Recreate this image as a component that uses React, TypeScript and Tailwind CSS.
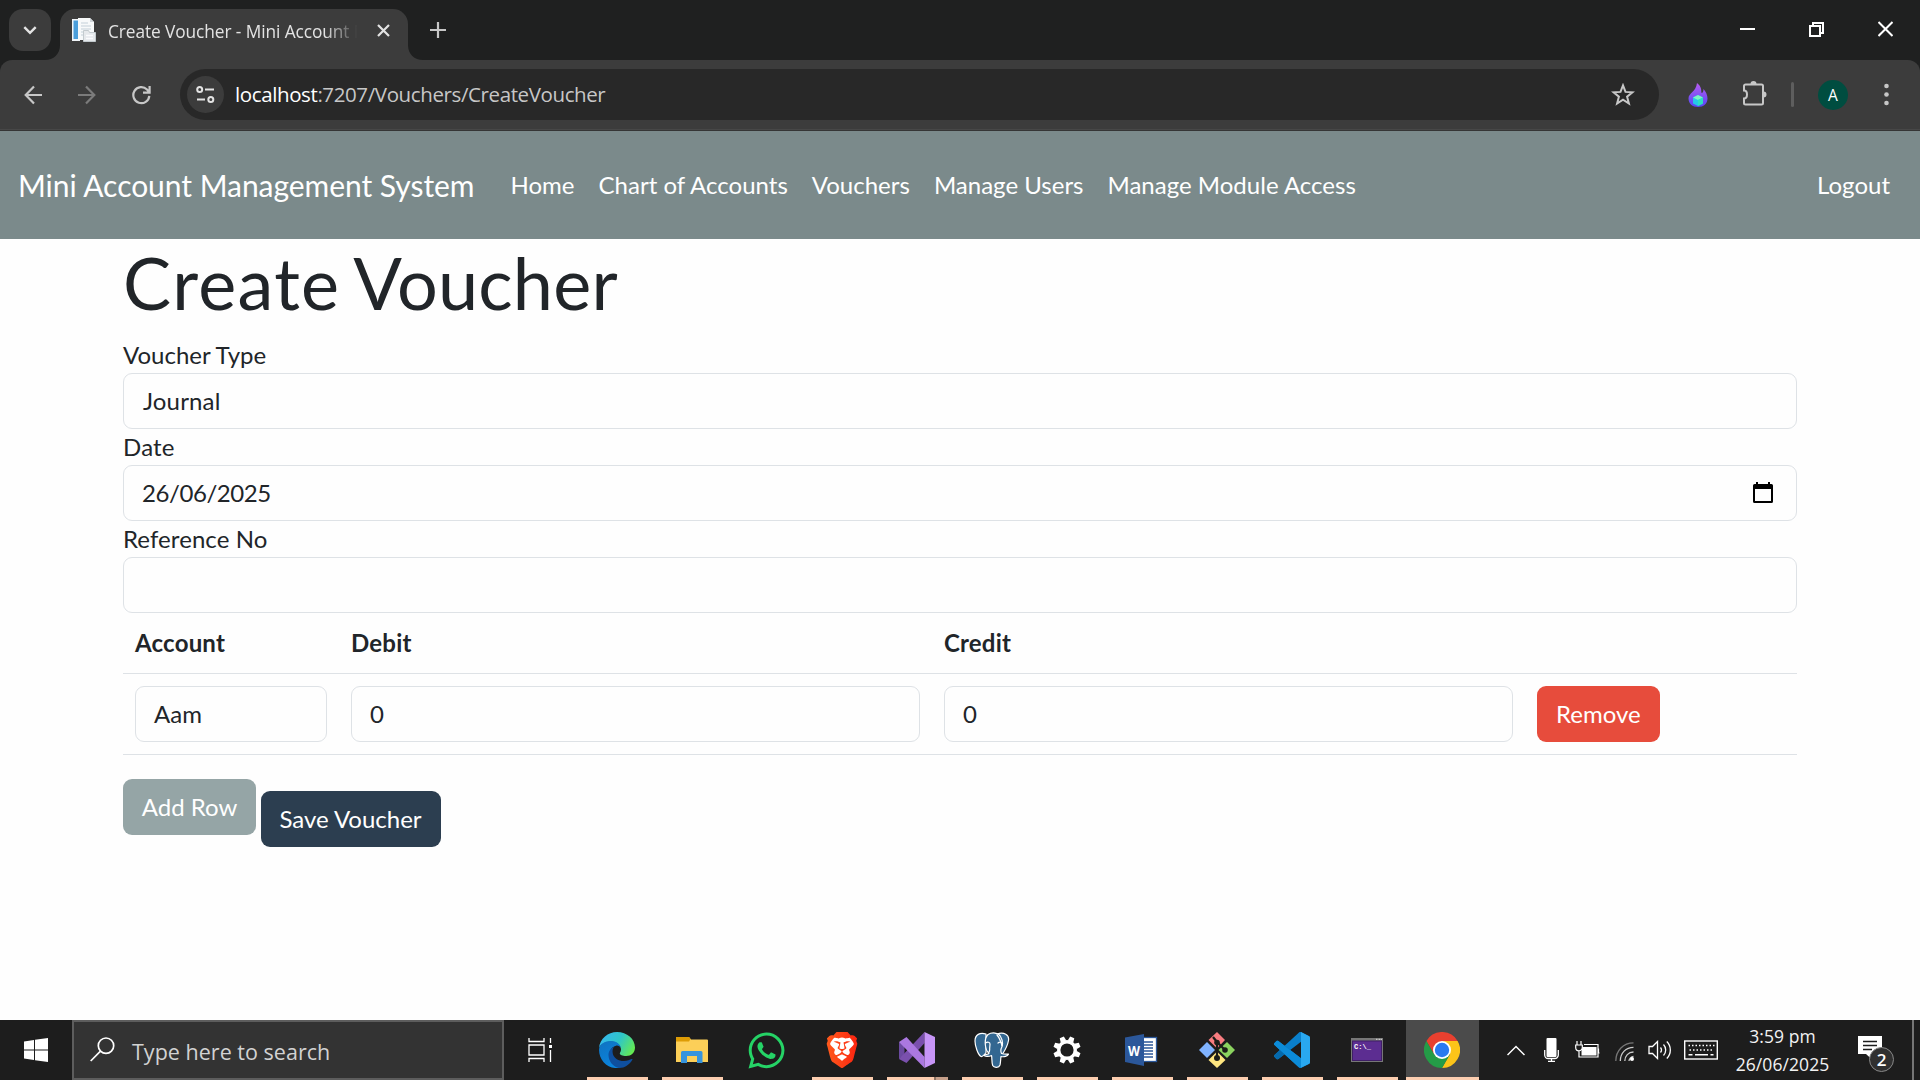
import React from 'react';
import { FaWhatsapp } from 'react-icons/fa';
import { SiBrave } from 'react-icons/si';

const UI = "font-['Open_Sans',sans-serif]";

/* ---------- Browser chrome ---------- */

function TabStrip() {
  return (
    <div className="flex h-[60px] items-start bg-[#1f2020] pl-[9px]">
      <button className="mt-[9px] flex h-[42px] w-[42px] items-center justify-center rounded-[14px] bg-[#3c3c3c]">
        <svg width="14" height="9" viewBox="0 0 14 9" fill="none" stroke="#e3e3e3" strokeWidth="2.4">
          <path d="M1.3 1.2 7 6.9l5.700-5.700" />
        </svg>
      </button>
      <svg className="mt-[45px] -ml-[6px]" width="15" height="15" viewBox="0 0 15 15">
        <path d="M15 0v15H0C8.500 15 15 9 15 0Z" fill="#3c3c3c" />
      </svg>
      <div className="mt-[9px] flex h-[51px] w-[348px] items-start rounded-t-[15px] bg-[#3c3c3c] pl-[11px]">
        <svg className="mt-[9px] shrink-0" width="26" height="25" viewBox="0 0 26 25">
          <rect x="1" y="1" width="8" height="22" fill="#f1f5f8" />
          <rect x="2.500" y="2.500" width="4.500" height="18.500" fill="#4a9edb" />
          <path d="M7 0h12l4 4v18H7Z" fill="#f7f9fa" />
          <path d="M19 0v4h4" fill="#cfd5da" />
          <path d="M10 5h7M10 8h10M10 11h10M10 14h3M10 17h2" stroke="#d5dde3" strokeWidth="1.500" />
          <path d="M12.500 12.500h5l1 2h6v9h-12Z" fill="#e6e9ec" stroke="#c3cace" />
          <path d="M15 17.500h7M15 20.500h7" stroke="#fbfcfd" strokeWidth="1.500" />
        </svg>
        <div className={`${UI} mt-[9px] ml-[11px] h-[28px] w-[252px] shrink-0 overflow-hidden whitespace-nowrap text-[17.300px] leading-[28px] tracking-[-0.080px] text-[#e3e3e3] [mask-image:linear-gradient(to_right,black_86%,transparent_99%)]`}>
          Create Voucher - Mini Account M
        </div>
        <svg className="mt-[15px] ml-[17px] shrink-0" width="13" height="13" viewBox="0 0 13 13" stroke="#e3e3e3" strokeWidth="2.200">
          <path d="m1 1 11 11M12 1 1 12" />
        </svg>
      </div>
      <svg className="mt-[45px]" width="15" height="15" viewBox="0 0 15 15">
        <path d="M0 0v15h15C6.500 15 0 9 0 0Z" fill="#3c3c3c" />
      </svg>
      <svg className="mt-[22px] ml-[7px]" width="16" height="16" viewBox="0 0 16 16" stroke="#c7c7c7" strokeWidth="2.200">
        <path d="M8 0v16M0 8h16" />
      </svg>
      <div className="mt-[21px] mr-[27px] ml-auto flex items-center gap-[54px]">
        <svg width="15" height="16" viewBox="0 0 15 16"><path d="M0 7h15v2H0z" fill="#fff" /></svg>
        <svg width="15" height="16" viewBox="0 0 15 16" fill="none" stroke="#fff" strokeWidth="2">
          <path d="M1 5h10v10H1zM4 5V2h10v10h-3" />
        </svg>
        <svg width="15" height="16" viewBox="0 0 15 16" stroke="#fff" strokeWidth="2">
          <path d="m.5 1 14 14M14.500 1 .5 15" />
        </svg>
      </div>
    </div>
  );
}

function Toolbar() {
  return (
    <div className="bg-[#1f2020]">
      <div className="flex h-[71px] items-center rounded-t-[12px] border-b border-[#353535] bg-[#3c3c3c] pb-[1px] pl-[24px] shadow-[inset_0_-1px_0_#474747]">
        <svg width="18" height="20" viewBox="0 0 18 20" fill="none" stroke="#c7c7c7" strokeWidth="2.200">
          <path d="M18 10H2M10 1.500 1.700 10l8.300 8.500" />
        </svg>
        <svg className="ml-[36px]" width="18" height="20" viewBox="0 0 18 20" fill="none" stroke="#7b7b7b" strokeWidth="2.200">
          <path d="M0 10h16M8 1.500l8.300 8.500L8 18.500" />
        </svg>
        <svg className="ml-[35px]" width="20" height="20" viewBox="0 0 20 20" fill="none" stroke="#c7c7c7" strokeWidth="2.200">
          <path d="M18.300 10.800A8 8 0 1 1 16 4.500L18 6.700M18.600 1v6.600H12" />
        </svg>
        <div className="ml-[29px] flex h-[51px] w-[1479px] items-center rounded-full bg-[#282828] pl-[7px]">
          <div className="flex h-[37px] w-[37px] items-center justify-center rounded-full bg-[#3c3c3c]">
            <svg width="19" height="19" viewBox="0 0 19 19" fill="none" stroke="#e3e3e3" strokeWidth="2">
              <circle cx="3.700" cy="4.500" r="2.500" /><path d="M9 4.500h9M1 14.500h8" /><circle cx="14.800" cy="14.500" r="2.500" />
            </svg>
          </div>
          <div className={`${UI} -mt-[2px] ml-[11px] text-[20.500px] leading-[30px] tracking-[-0.390px] whitespace-nowrap text-[#c7c7c7]`}>
            <span className="text-white">localhost</span>:7207/Vouchers/CreateVoucher
          </div>
          <svg className="mr-[24px] ml-auto" width="24" height="23" viewBox="0 0 24 23" fill="none" stroke="#c7c7c7" strokeWidth="2">
            <path d="m12 2.400 2.500 6.500 7 .4-5.400 4.400 1.800 6.800L12 16.700l-5.900 3.800 1.800-6.800-5.400-4.400 7-.4Z" />
          </svg>
        </div>
        <svg className="ml-[29px]" width="20" height="24" viewBox="0 0 20 24">
          <defs>
            <linearGradient id="flame" x1="0" y1="0" x2="0" y2="1">
              <stop offset="0" stopColor="#b75cf2" /><stop offset="1" stopColor="#5548f5" />
            </linearGradient>
          </defs>
          <path d="M9 0c5 4 4 7 4.500 10 1.500 0 2-2 2-4 2.500 3 4 6 4 9.500 0 5-4 8.500-9.500 8.500S.5 20.500.5 15.500C.5 10 8 9 9 0Z" fill="url(#flame)" />
          <path d="m10 12 5 2.500v6L10 23l-5-2.500v-6Z" fill="#25c9e8" />
          <path d="m10 12 5 2.500-5 2.500-5-2.500Z" fill="#7cf5c3" /><path d="m10 17 5-2.500v6L10 23Z" fill="#2de0c0" />
        </svg>
        <svg className="-mt-[3px] ml-[33px]" width="26" height="26" viewBox="0 0 26 26">
          <path d="M4.500 4.500h16a1.500 1.500 0 0 1 1.500 1.500v17a1.500 1.500 0 0 1-1.500 1.500h-16A1.500 1.500 0 0 1 3 23v-4.500c2 0 3-1.500 3-4s-1-4-3-4V6a1.500 1.500 0 0 1 1.500-1.500Z" fill="none" stroke="#c7c7c7" strokeWidth="2" />
          <path d="M9.500 4a3 3 0 0 1 6 0M22.500 11.500a3 3 0 0 1 0 6" fill="#c7c7c7" />
        </svg>
        <div className="ml-[24px] h-[25px] w-[3px] rounded-full bg-[#5e5e5e]" />
        <div className={`${UI} ml-[24px] flex h-[30px] w-[30px] items-center justify-center rounded-full bg-[#004d40] text-[15.500px] text-white`}>A</div>
        <svg className="ml-[36px]" width="5" height="23" viewBox="0 0 5 23" fill="#c7c7c7">
          <circle cx="2.500" cy="3" r="2.300" /><circle cx="2.500" cy="11.500" r="2.300" /><circle cx="2.500" cy="20" r="2.300" />
        </svg>
      </div>
    </div>
  );
}

/* ---------- Page ---------- */

const links = ['Home', 'Chart of Accounts', 'Vouchers', 'Manage Users', 'Manage Module Access'];

function Navbar() {
  return (
    <nav className="flex h-[108px] items-center bg-[#7b8a8b] px-[18px] pb-px text-white">
      <a className="mt-[2px] mr-[24px] text-[30px] leading-[45px] tracking-[-0.040px]">Mini Account Management System</a>
      {links.map((l) => (
        <a key={l} className="px-[12px] tracking-[0.010px]">{l}</a>
      ))}
      <a className="ml-auto px-[12px]">Logout</a>
    </nav>
  );
}

function Field({ children, className = '' }: { children?: React.ReactNode; className?: string }) {
  return (
    <div className={`flex h-[56px] items-center rounded-[9px] border border-[#dee2e6] px-[18px] ${className}`}>{children}</div>
  );
}

function CalendarIcon() {
  return (
    <svg className="mr-[4px] ml-auto" width="22" height="22" viewBox="0 0 22 22">
      <path d="M4 0h2v2h10V0h2v2h1.500A1.500 1.500 0 0 1 21 3.500v16a1.500 1.500 0 0 1-1.500 1.500h-17A1.500 1.500 0 0 1 1 19.500v-16A1.500 1.500 0 0 1 2.500 2H4ZM3 7v12h16V7Z" fill="#000" />
    </svg>
  );
}

function VoucherForm() {
  return (
    <main className="flex-1 px-[123px] text-[#212529]">
      <h1 className="mb-[12px] text-[72px] leading-[86px]">
        <span className="tracking-[1.300px]">Create</span>
        <span className="tracking-[-5.500px]"> </span>
        <span className="tracking-[0.200px]">Voucher</span>
      </h1>
      <div>Voucher Type</div>
      <Field><span className="ml-px tracking-[0.150px]">Journal</span></Field>
      <div className="tracking-[0.200px]">Date</div>
      <Field><span className="tracking-[-0.420px]">26/06/2025</span><CalendarIcon /></Field>
      <div className="tracking-[0.080px]">Reference No</div>
      <Field />
      <div className="grid grid-cols-[216px_593px_593px_1fr] border-b border-[#dee2e6] font-bold tracking-[0.200px]">
        <div className="p-[12px]">Account</div>
        <div className="p-[12px]">Debit</div>
        <div className="p-[12px]">Credit</div>
      </div>
      <div className="grid grid-cols-[216px_593px_593px_1fr] border-b border-[#dee2e6] pt-[12px] pb-[12px]">
        <Field className="mx-[12px]">Aam</Field>
        <Field className="mx-[12px]">0</Field>
        <Field className="mx-[12px]">0</Field>
        <div className="px-[12px]">
          <button className="h-[56px] rounded-[9px] bg-[#e74c3c] px-[19px] text-white">Remove</button>
        </div>
      </div>
      <div className="mt-[24px] flex items-start gap-[5px] text-white">
        <button className="h-[56px] w-[133px] rounded-[9px] bg-[#95a5a6] whitespace-nowrap">Add Row</button>
        <button className="mt-[12px] h-[56px] w-[180px] rounded-[9px] bg-[#2c3e50] pr-px whitespace-nowrap">Save Voucher</button>
      </div>
    </main>
  );
}

/* ---------- Taskbar ---------- */

function Edge() {
  return (
    <svg width="36" height="36" viewBox="0 0 36 36">
      <defs>
        <linearGradient id="e1" x1="0" y1="0.300" x2="1" y2="0.700">
          <stop offset="0" stopColor="#35b8f0" /><stop offset=".5" stopColor="#2fc6c8" /><stop offset="1" stopColor="#66eb4e" />
        </linearGradient>
        <linearGradient id="e2" x1="0" y1="0" x2="0.600" y2="1">
          <stop offset="0" stopColor="#1072c0" /><stop offset="1" stopColor="#0a84de" />
        </linearGradient>
      </defs>
      <path d="M0 16C1 6.500 9 0 18 0c10 0 18 7 18 15.500 0 5-3.700 8.500-8.800 8.500-4 0-6.400-1.200-6.400-2.500 0-1 1.200-1.500 1.200-4C22 13.500 18 9.500 12 9.500 6 9.500 1.500 12.500 0 16Z" fill="url(#e1)" />
      <path d="M0 18C0 12 6 9 12 9c5.500 0 9.500 3.500 10 7-1-1.800-3-2.800-5-2.300-4 1-6.500 4.500-6.500 9 0 6 4.500 11.500 10.500 13-11.500 2.300-21-7-21-17.700Z" fill="url(#e2)" />
      <path d="M15 15c-3 3-2 14 10 14 3.500 0 6-1.500 7.500-2 1-.3 1.200.4.7 1C30.500 32.500 25.500 36 20.500 36 14 35 9.500 29 9.500 23c0-4 2.500-7 5.500-8Z" fill="#0f4f9e" />
    </svg>
  );
}

function Folder() {
  return (
    <svg width="32" height="27" viewBox="0 0 32 27">
      <path d="M0 1a1 1 0 0 1 1-1h12l2 2.500H31a1 1 0 0 1 1 1V25H0Z" fill="#fccf58" />
      <path d="M0 1a1 1 0 0 1 1-1h12l1.500 2L13 4.500H0Z" fill="#dd9c05" />
      <path d="M5 26V15.500A1.500 1.500 0 0 1 6.500 14h18.500a1.500 1.500 0 0 1 1.500 1.500V26H21v-7H11v7Z" fill="#3694dd" />
    </svg>
  );
}

function Brave() {
  return (
    <svg width="36" height="36" viewBox="0 0 36 36">
      <defs>
        <linearGradient id="brave"><stop offset="0" stopColor="#ff5a1c" /><stop offset="1" stopColor="#fb2410" /></linearGradient>
      </defs>
      <path d="M8 5h20l3 8-4 13-9 7-9-7-4-13Z" fill="#fff" />
      <SiBrave x="0" y="0" size={36} fill="url(#brave)" />
    </svg>
  );
}

function VisualStudio() {
  return (
    <svg width="36" height="36" viewBox="0 0 36 36">
      <path d="M0 10 5.500 14v9L0 27Z" fill="#6b4aa0" />
      <path d="M0 27 25.500 0v11L7.500 31Z" fill="#7a50ad" />
      <path d="M0 10 7.500 5l18 20v11Z" fill="#ab78e0" />
      <path d="M25.500 0 36 5v26l-10.500 5Z" fill="#c795f7" />
    </svg>
  );
}

function Postgres() {
  return (
    <svg width="36" height="37" viewBox="0 0 36 37" fill="#336791" stroke="#fff" strokeWidth="1.200" strokeLinejoin="round" strokeLinecap="round">
      <path d="M12 2C6 .2 1 2.500 1 9c0 5 3 14 6 15.500 2 .8 3.500-2 5-4Z" />
      <path d="M23 2c7-2.500 12.500 1 11.500 6.500-1 5.500-4 10.500-6 13.500l-6-2Z" />
      <path d="M14 2.500c4-2.500 10.500-2 12.500 2 2 3.500 2.500 7 1.500 10-1 2-1.500 5-.5 7 2.500 1 5 .5 7 .7-1 2-4.500 3-7.500 2.300-.5 3-.3 6-1 8.500-1 3-6 3-7.300.5-1.200-3-.5-7.500-1.200-10-3 1.500-7 1-7.500-.3 2-1 4.500-.7 5-2-4-2.500-5.500-14.500-1-18.700Z" />
      <path d="M11.500 11c2-1.300 4.500-1 4.500 1s-.5 3.500-.3 5.500c0 2-1 3-1 3M24 11c1.200-1 2.700-1 4 0M23 3c2.500 3 4 7 5 11" fill="none" />
    </svg>
  );
}

function Gear() {
  return (
    <svg width="28" height="28" viewBox="-14 -14 28 28">
      <g fill="#fff">
        {[22.5, 67.5, 112.5, 157.5, 202.5, 247.5, 292.5, 337.5].map((a) => (
          <path key={a} d="m-3 -9 .8-4.700h4.400L3-9Z" transform={`rotate(${a})`} />
        ))}
      </g>
      <circle r="8.300" fill="none" stroke="#fff" strokeWidth="3.400" />
    </svg>
  );
}

function Word() {
  return (
    <svg width="33" height="32" viewBox="0 0 33 32">
      <rect x="17" y="3.500" width="14.500" height="24" fill="#fff" stroke="#2b579a" strokeWidth="1.300" />
      <path d="M18 8h10M18 11h10M18 14h10M18 17h10M18 20h10M18 23h10" stroke="#2b579a" strokeWidth="1.500" />
      <path d="M0 3.500 19 0v32L0 28Z" fill="#2b579a" />
      <text x="3" y="21.500" fontFamily="Open Sans, sans-serif" fontWeight="700" fontSize="15" textLength="12" lengthAdjust="spacingAndGlyphs" fill="#fff">W</text>
    </svg>
  );
}

function Git() {
  return (
    <svg width="36" height="36" viewBox="0 0 36 36">
      <path d="m18 0 8 8-8 8.500L9.500 8Z" fill="#f87c80" />
      <path d="m28 10 8 8-8 8-8.500-8Z" fill="#8bd35f" />
      <path d="m8 10 8 8-8 8-8-8Z" fill="#80b3ff" />
      <path d="m18 19.500 8.500 8.500-8.500 8L9.500 28Z" fill="#ffe680" />
      <path d="m14 5 4 5v15M18 10l8 8" stroke="#1b1c18" strokeWidth="2.200" fill="none" />
      <circle cx="18" cy="10.500" r="2.800" fill="#1b1c18" /><circle cx="18" cy="26" r="3" fill="#1b1c18" /><circle cx="26" cy="18" r="2.800" fill="#1b1c18" />
    </svg>
  );
}

function VSCode() {
  return (
    <svg width="36" height="36" viewBox="0 0 100 100">
      <path fill="#0a80cc" fillRule="evenodd" d="M70.900 99.300C72.500 99.900 74.300 99.900 75.900 99.100L96.500 89.200C98.600 88.200 100 86 100 83.600V16.400C100 14 98.600 11.800 96.500 10.800L75.900.9C73.800-.1 71.300.1 69.500 1.400 69.300 1.600 69 1.800 68.800 2.100L29.400 38 12.200 25C10.600 23.800 8.400 23.900 6.900 25.200L1.400 30.300C-.5 31.900-.5 34.800 1.400 36.400L16.200 50 1.400 63.600C-.5 65.200-.5 68.100 1.400 69.700L6.900 74.800C8.400 76.100 10.600 76.200 12.200 75L29.400 62 68.800 97.900C69.400 98.500 70.100 99 70.900 99.300ZM75 27.300 45.100 50 75 72.700Z" />
      <path fill="#29a8f0" d="M75 0 96.500 10.800C98.600 11.800 100 14 100 16.400V83.600C100 86 98.600 88.200 96.500 89.200L75 99.500Z" />
      <path fill="#0569ac" d="M16.200 50 1.400 63.600C-.5 65.200-.5 68.100 1.400 69.700L6.900 74.800C8.400 76.100 10.600 76.200 12.200 75L29.400 62 45 50 29.400 38Z" />
      <path fill="#0c8bd8" d="M1.400 36.400C-.5 34.800-.5 31.900 1.400 30.300L6.900 25.200C8.400 23.900 10.600 23.800 12.200 25L75 72.700V99.500C72 99.500 70 99 68.800 97.900Z" />
    </svg>
  );
}

function Terminal() {
  return (
    <svg width="32" height="24" viewBox="0 0 32 24">
      <rect width="32" height="24" fill="#777" />
      <rect x="1.500" y="3" width="29" height="19.500" fill="#5c2d91" stroke="#3f1f66" />
      <path d="M25 1.300h1.500M27.500 1.300H29M29.500 1.300H31" stroke="#ddd" />
      <text x="3" y="10.500" fontFamily="Liberation Mono, monospace" fontWeight="700" fontSize="7" textLength="17" lengthAdjust="spacingAndGlyphs" fill="#fff">C:\_</text>
    </svg>
  );
}

function Chrome() {
  return (
    <svg width="36" height="36" viewBox="-18 -18 36 36">
      <path d="M-15.600-9A18 18 0 0 1 15.600-9L0-9-7.800 4.500Z" fill="#e8402f" />
      <path d="M15.600-9A18 18 0 0 1 0 18L7.800 4.500 0-9Z" fill="#fcc419" />
      <path d="M0 18A18 18 0 0 1-15.600-9L-7.800 4.500 7.800 4.500Z" fill="#249c47" />
      <circle r="9" fill="#fff" /><circle r="7.200" fill="#2a7af0" />
    </svg>
  );
}

const apps = [
  { name: 'edge', icon: <Edge />, open: true },
  { name: 'folder', icon: <Folder />, open: true },
  { name: 'whatsapp', icon: <FaWhatsapp size={41} color="#25d366" className="shrink-0" />, open: false },
  { name: 'brave', icon: <Brave />, open: true },
  { name: 'vs', icon: <VisualStudio />, open: true, stacked: true },
  { name: 'pg', icon: <Postgres />, open: true },
  { name: 'gear', icon: <Gear />, open: true },
  { name: 'word', icon: <Word />, open: true },
  { name: 'git', icon: <Git />, open: true },
  { name: 'code', icon: <VSCode />, open: true },
  { name: 'cmd', icon: <Terminal />, open: true },
];

function Taskbar() {
  return (
    <div className={`${UI} flex h-[60px] items-stretch bg-[#1d1d1d] text-white`}>
      <div className="flex w-[72px] items-center justify-center">
        <svg width="24" height="24" viewBox="0 0 24 24" fill="#fff">
          <path d="M0 3.400 10 2v9.500H0ZM11 1.800 24 0v11.500H11ZM0 12.500h10V22L0 20.600ZM11 12.500h13V24l-13-1.800Z" />
        </svg>
      </div>
      <div className="flex w-[432px] items-center border-2 border-[#5d5d5d] bg-[#333333] pl-[16px]">
        <svg className="-mt-[1px]" width="25" height="25" viewBox="0 0 25 25" fill="none" stroke="#fff" strokeWidth="1.700">
          <circle cx="16" cy="8.700" r="7.700" /><path d="M10.500 14.200.7 24" />
        </svg>
        <div className="mt-[3px] ml-[17px] text-[21.500px] leading-[30px] tracking-[0.020px] whitespace-nowrap text-[#d2d2d2]">Type here to search</div>
      </div>
      <div className="flex w-[76px] items-center justify-center pr-[4px]">
        <svg width="24" height="24" viewBox="0 0 24 24" fill="none" stroke="#fff" strokeWidth="1.300">
          <path d="M1 0v3.500h15V0M1 24v-3.500h15V24M1 7h15v10H1ZM22.500 0v5M22.500 12v12" /><path d="M21 7h3v3h-3z" fill="#fff" stroke="none" />
        </svg>
      </div>
      {apps.map((a) => (
        <div key={a.name} className="flex w-[75px] flex-col items-center">
          <div className="flex h-[57px] items-center justify-center pt-[3px] pr-[2px]">{a.icon}</div>
          {a.open && (
            <div className="flex h-[3px] w-[61px] bg-[#fcceb0]">
              {a.stacked && <div className="ml-auto w-[14px] border-l-2 border-[#8e7464] bg-[#c6a08a]" />}
            </div>
          )}
        </div>
      ))}
      <div className="ml-[1px] flex w-[73px] flex-col bg-[#4b4b4b]">
        <div className="flex h-[57px] items-center justify-center pt-[3px] pr-[1px]"><Chrome /></div>
        <div className="h-[3px] bg-[#fcceb0]" />
      </div>
      <div className="flex flex-1 items-center">
        <svg className="ml-[28px]" width="18" height="11" viewBox="0 0 18 11" fill="none" stroke="#fff" strokeWidth="1.500"><path d="M.5 10 9 1.500l8.500 8.500" /></svg>
        <svg className="ml-[19px]" width="15" height="24" viewBox="0 0 15 24">
          <rect x="2.500" width="10" height="19" rx="1" fill="#fff" /><path d="M.7 12v5a3.500 3.500 0 0 0 3.500 3.500h6.600a3.500 3.500 0 0 0 3.500-3.500v-5M7.500 20.500v2.800M4 23.300h7" fill="none" stroke="#fff" strokeWidth="1.300" />
        </svg>
        <svg className="-mt-[1px] ml-[16px]" width="25" height="17" viewBox="0 0 25 17" fill="none" stroke="#fff" strokeWidth="1.200">
          <path d="M2 0v4M6 0v4M.7 4h6.600v2.500a3 3 0 0 1-6.600 0ZM4 9.500V16h19V3.500H9M23.500 7.500v4.500h1" /><path d="M7.500 6h14v8.500H6.500V10Z" fill="#fff" stroke="none" />
        </svg>
        <svg className="mt-[3px] ml-[15px]" width="19" height="19" viewBox="0 0 19 19" fill="none" stroke="#fff" strokeWidth="1.300">
          <path d="M.8 19C.8 8.500 8.500.8 18.500.8" stroke="#777" /><path d="M5.300 19C5.300 11 11 5.300 18.500 5.300M9.800 19c0-5 3.700-9 8.700-9M14 19c0-2 2-4.300 4.500-4.500" stroke="#ccc" /><circle cx="17" cy="17" r="2" fill="#fff" stroke="none" />
        </svg>
        <svg className="ml-[14px]" width="23" height="20" viewBox="0 0 23 20" fill="none" stroke="#fff" strokeWidth="1.300">
          <path d="M1 6.500h3.500l5-5v17l-5-5H1ZM12.500 7.500a4 4 0 0 1 0 5M15.500 4.500a8 8 0 0 1 0 11M18.800 1.500a12 12 0 0 1 0 17" />
        </svg>
        <svg className="-mt-[1px] ml-[13px]" width="34" height="20" viewBox="0 0 34 20" fill="none" stroke="#fff" strokeWidth="1.400">
          <rect x=".7" y="1" width="32.600" height="18" /><path d="M4.500 5.500h26M5.500 10h24" strokeDasharray="1.500 2" /><path d="M4.500 14.700h4M11 14.700h13M26.500 14.700h3" />
        </svg>
        <div className="w-[129px] text-center text-[17.500px] leading-[28px] tracking-[0.080px] whitespace-nowrap text-[#f2f2f2]">
          <div>3:59 pm</div>
          <div>26/06/2025</div>
        </div>
        <div className="relative mt-[8px] ml-[11px] h-[36px] w-[38px]">
          <svg width="25" height="24" viewBox="0 0 25 24">
            <path d="M0 0h24v18h-9.500v6L8 18H0Z" fill="#fff" /><path d="M5 5.500h14M5 9.500h14M5 13.500h9" stroke="#1d1d1d" strokeWidth="1.300" />
          </svg>
          <div className="absolute top-[11px] left-[11px] flex h-[25px] w-[25px] items-center justify-center rounded-full border border-[#888] bg-[#303030] text-[17px] font-semibold">2</div>
        </div>
      </div>
      <div className="mr-[6px] w-[2px] bg-[#767676]" />
    </div>
  );
}

export default function App() {
  return (
    <div className="flex h-[1080px] w-[1920px] flex-col overflow-hidden bg-[#fefefe] font-['Lato',sans-serif] text-[24px] leading-[36px]">
      <TabStrip />
      <Toolbar />
      <Navbar />
      <VoucherForm />
      <Taskbar />
    </div>
  );
}
